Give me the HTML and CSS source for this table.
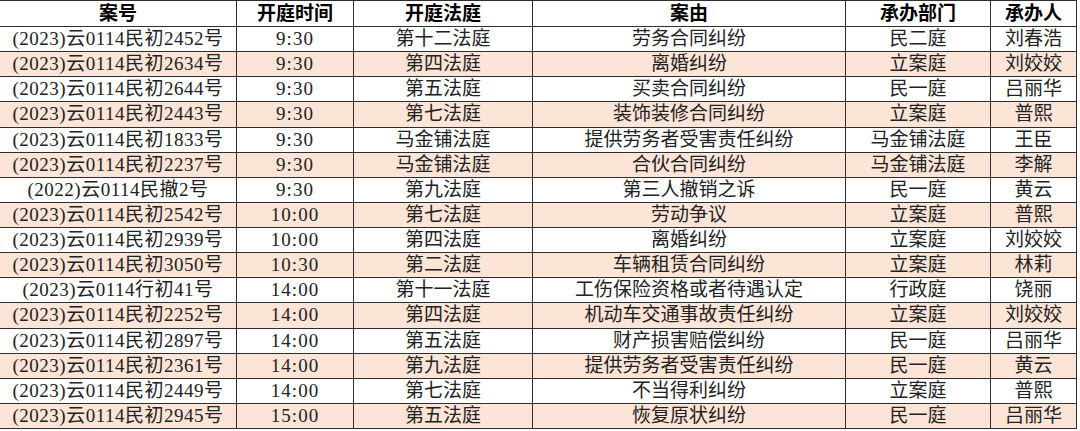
FILE: index.html
```html
<!DOCTYPE html>
<html lang="zh-CN">
<head>
<meta charset="utf-8">
<title>开庭公告</title>
<link rel="stylesheet" href="styles.css">
</head>
<body>
<table class="sheet">
  <colgroup>
    <col class="c-case"><col class="c-time"><col class="c-room"><col class="c-cause"><col class="c-dept"><col class="c-judge">
  </colgroup>
  <thead>
    <tr class="head"><th>案号</th><th>开庭时间</th><th>开庭法庭</th><th>案由</th><th>承办部门</th><th>承办人</th></tr>
  </thead>
  <tbody>
    <tr><td class="n">(2023)云0114民初2452号</td><td class="t">9:30</td><td>第十二法庭</td><td>劳务合同纠纷</td><td>民二庭</td><td>刘春浩</td></tr>
    <tr class="alt"><td class="n">(2023)云0114民初2634号</td><td class="t">9:30</td><td>第四法庭</td><td>离婚纠纷</td><td>立案庭</td><td>刘姣姣</td></tr>
    <tr><td class="n">(2023)云0114民初2644号</td><td class="t">9:30</td><td>第五法庭</td><td>买卖合同纠纷</td><td>民一庭</td><td>吕丽华</td></tr>
    <tr class="alt"><td class="n">(2023)云0114民初2443号</td><td class="t">9:30</td><td>第七法庭</td><td>装饰装修合同纠纷</td><td>立案庭</td><td>普熙</td></tr>
    <tr><td class="n">(2023)云0114民初1833号</td><td class="t">9:30</td><td>马金铺法庭</td><td>提供劳务者受害责任纠纷</td><td>马金铺法庭</td><td>王臣</td></tr>
    <tr class="alt"><td class="n">(2023)云0114民初2237号</td><td class="t">9:30</td><td>马金铺法庭</td><td>合伙合同纠纷</td><td>马金铺法庭</td><td>李解</td></tr>
    <tr><td class="n">(2022)云0114民撤2号</td><td class="t">9:30</td><td>第九法庭</td><td>第三人撤销之诉</td><td>民一庭</td><td>黄云</td></tr>
    <tr class="alt"><td class="n">(2023)云0114民初2542号</td><td class="t">10:00</td><td>第七法庭</td><td>劳动争议</td><td>立案庭</td><td>普熙</td></tr>
    <tr><td class="n">(2023)云0114民初2939号</td><td class="t">10:00</td><td>第四法庭</td><td>离婚纠纷</td><td>立案庭</td><td>刘姣姣</td></tr>
    <tr class="alt"><td class="n">(2023)云0114民初3050号</td><td class="t">10:30</td><td>第二法庭</td><td>车辆租赁合同纠纷</td><td>立案庭</td><td>林莉</td></tr>
    <tr><td class="n">(2023)云0114行初41号</td><td class="t">14:00</td><td>第十一法庭</td><td>工伤保险资格或者待遇认定</td><td>行政庭</td><td>饶丽</td></tr>
    <tr class="alt"><td class="n">(2023)云0114民初2252号</td><td class="t">14:00</td><td>第四法庭</td><td>机动车交通事故责任纠纷</td><td>立案庭</td><td>刘姣姣</td></tr>
    <tr><td class="n">(2023)云0114民初2897号</td><td class="t">14:00</td><td>第五法庭</td><td>财产损害赔偿纠纷</td><td>民一庭</td><td>吕丽华</td></tr>
    <tr class="alt"><td class="n">(2023)云0114民初2361号</td><td class="t">14:00</td><td>第九法庭</td><td>提供劳务者受害责任纠纷</td><td>民一庭</td><td>黄云</td></tr>
    <tr><td class="n">(2023)云0114民初2449号</td><td class="t">14:00</td><td>第七法庭</td><td>不当得利纠纷</td><td>立案庭</td><td>普熙</td></tr>
    <tr class="alt"><td class="n">(2023)云0114民初2945号</td><td class="t">15:00</td><td>第五法庭</td><td>恢复原状纠纷</td><td>民一庭</td><td>吕丽华</td></tr>
  </tbody>
</table>
</body>
</html>
```
FILE: styles.css
```css
html, body {
  margin: 0;
  padding: 0;
  background: #ffffff;
}

.sheet {
  border-collapse: collapse;
  table-layout: fixed;
  width: 1077px;
  margin-left: -1px;
  font-family: "Liberation Serif", "Noto Sans CJK SC", serif;
  font-size: 19px;
  color: #222222;
}

.c-case { width: 237px; }
.c-time { width: 117px; }
.c-room { width: 179px; }
.c-cause { width: 313px; }
.c-dept { width: 145px; }
.c-judge { width: 86px; }

.sheet th,
.sheet td {
  border: 1px solid #2e2e2e;
  text-align: center;
  vertical-align: middle;
  padding: 0;
  white-space: nowrap;
  overflow: hidden;
  line-height: 22px;
}

.sheet th {
  font-weight: 700;
  color: #000;
  height: 25px;
}

.sheet td {
  height: 24.125px;
}

.sheet .n {
  letter-spacing: 0.5px;
}

.sheet .t {
  letter-spacing: 1px;
}

.sheet tr.alt td {
  background: #fce4d6;
}
```
